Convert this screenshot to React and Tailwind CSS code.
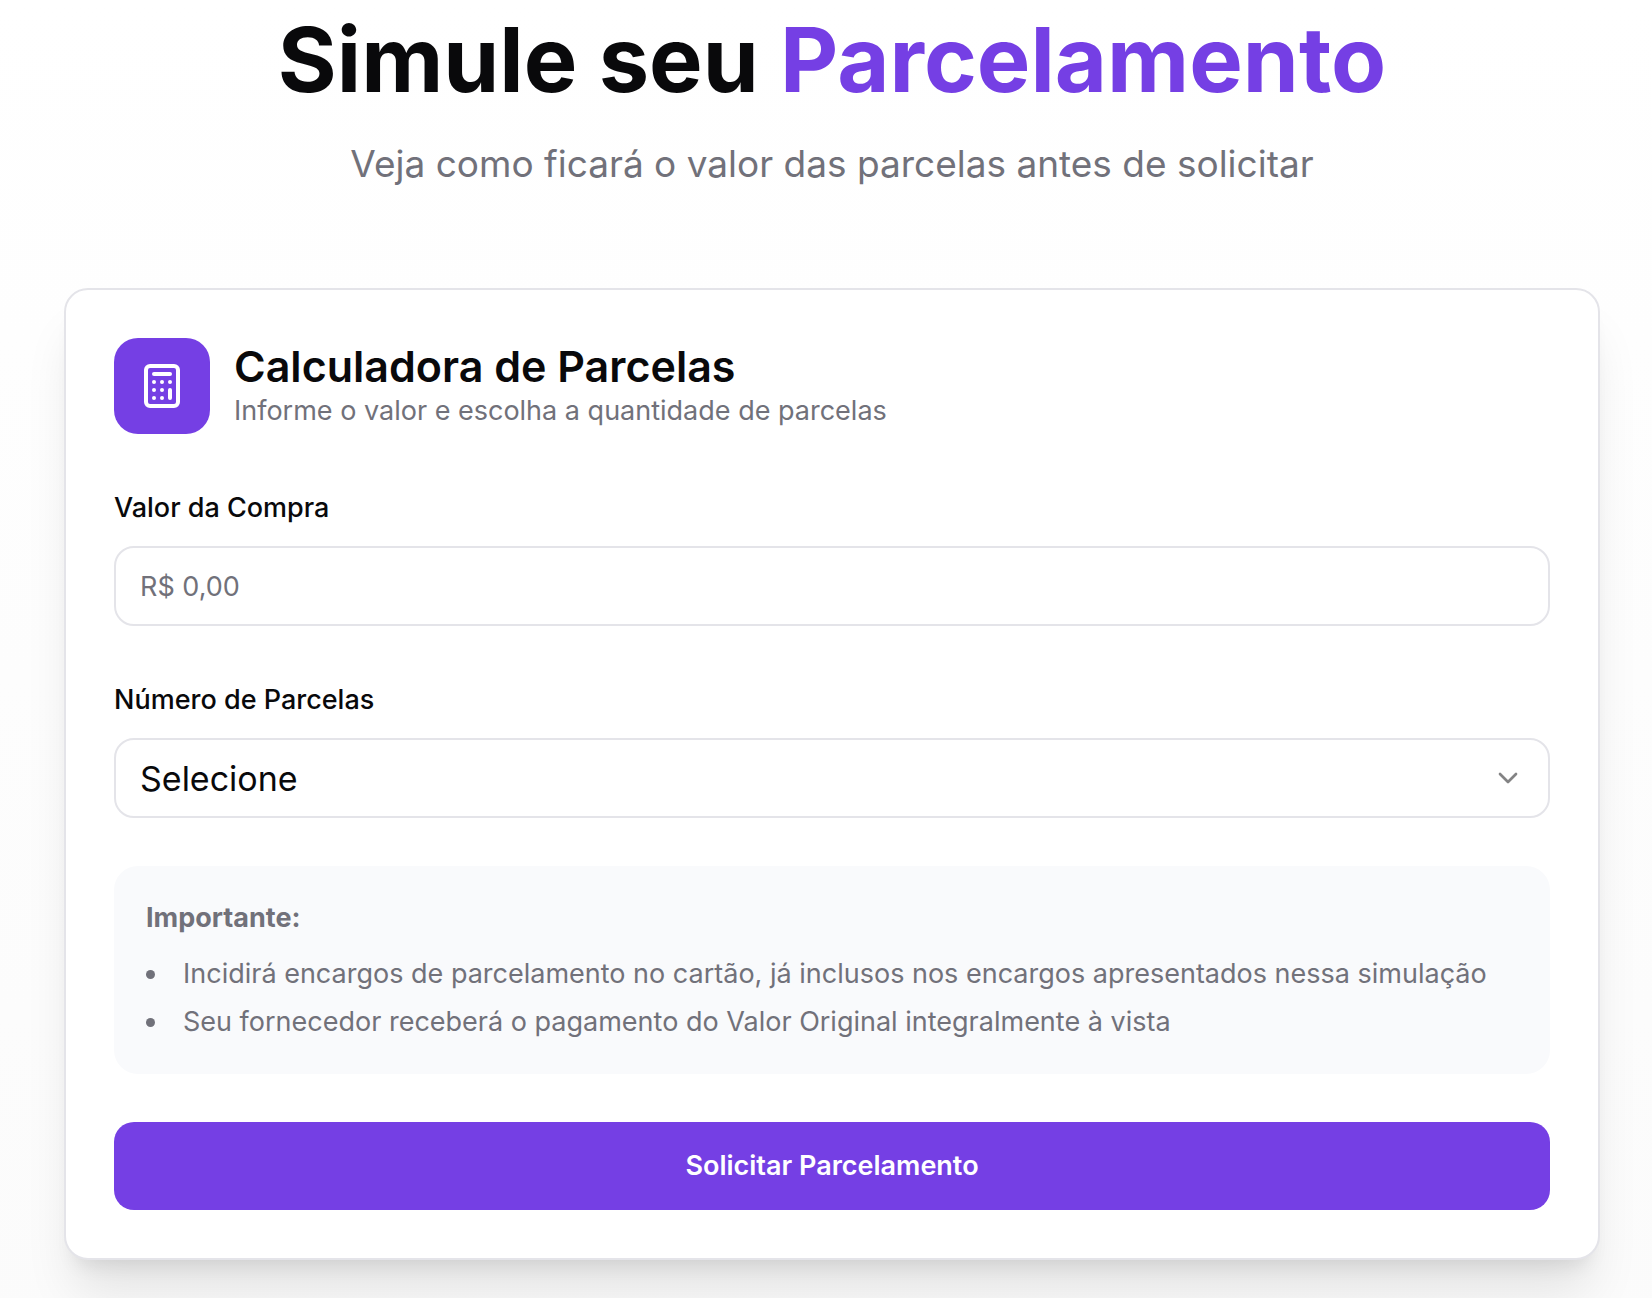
import { useState } from 'react';
import { Calculator, ChevronDown } from 'lucide-react';

const installments = [2, 3, 4, 5, 6, 7, 8, 9, 10, 11, 12];

const notes = [
  'Incidirá encargos de parcelamento no cartão, já inclusos nos encargos apresentados nessa simulação',
  'Seu fornecedor receberá o pagamento do Valor Original integralmente à vista',
];

function SimulatorForm() {
  const [amount, setAmount] = useState('');
  const [count, setCount] = useState('');

  const handleSubmit = (e) => {
    e.preventDefault();
  };

  return (
    <form onSubmit={handleSubmit} className="space-y-12">
      <div>
        <label htmlFor="amount" className="block mb-3 text-[27px] leading-13 font-medium">
          Valor da Compra
        </label>
        <input
          id="amount"
          type="text"
          inputMode="decimal"
          placeholder="R$ 0,00"
          value={amount}
          onChange={(e) => setAmount(e.target.value)}
          className="block w-full h-20 px-6 text-[27px] bg-white border-2 border-[#e4e4e9] rounded-[20px] placeholder:text-[#71717a] placeholder:opacity-100"
        />
      </div>

      <div>
        <label htmlFor="installments" className="block mb-3 text-[27px] leading-13 font-medium">
          Número de Parcelas
        </label>
        <div className="relative">
          <select
            id="installments"
            value={count}
            onChange={(e) => setCount(e.target.value)}
            className="block w-full h-20 px-6 text-[34px] appearance-none bg-white border-2 border-[#e4e4e9] rounded-[20px]"
          >
            <option value="">Selecione</option>
            {installments.map((n) => (
              <option key={n} value={n}>
                {n}x
              </option>
            ))}
          </select>
          <ChevronDown className="absolute right-6.5 top-6 h-8 w-8 opacity-50 pointer-events-none" />
        </div>
      </div>

      <div className="p-8 rounded-3xl bg-[#f9fafc] text-[27px] leading-10 text-[#71717a]">
        <p className="mb-4 font-bold">Importante:</p>
        <ul className="space-y-2 list-disc list-inside">
          {notes.map((note) => (
            <li key={note}>{note}</li>
          ))}
        </ul>
      </div>

      <button
        type="submit"
        className="block w-full h-22 rounded-[20px] bg-[#753fe4] text-[27px] font-semibold text-white"
      >
        Solicitar Parcelamento
      </button>
    </form>
  );
}

function App() {
  return (
    <main className="min-h-screen pt-3 pb-24 pl-16 pr-13 bg-linear-to-b from-white to-[#fbfbfb] font-['Inter',sans-serif] text-[#09090b]">
      <div className="max-w-[1536px] mx-auto">
        <div className="mb-24 text-center">
          <h1 className="mb-7 text-[90px] leading-24 font-bold">
            Simule seu <span className="text-[#753fe4]">Parcelamento</span>
          </h1>
          <p className="text-[37px] leading-14 text-[#71717a]">
            Veja como ficará o valor das parcelas antes de solicitar
          </p>
        </div>

        <div className="p-12 bg-white border-2 border-[#e4e4e9] rounded-3xl shadow-[0_40px_50px_-10px_rgb(0_0_0/0.1),0_16px_20px_-12px_rgb(0_0_0/0.1)]">
          <div className="flex items-center gap-6 mb-12">
            <div className="flex items-center justify-center h-24 w-24 rounded-3xl bg-[#753fe4]">
              <Calculator className="h-12 w-12 text-white" />
            </div>
            <div>
              <h2 className="text-[43px] leading-[50px] font-semibold">Calculadora de Parcelas</h2>
              <p className="text-[27px] leading-10 text-[#71717a]">
                Informe o valor e escolha a quantidade de parcelas
              </p>
            </div>
          </div>

          <SimulatorForm />
        </div>
      </div>
    </main>
  );
}

export default App;
